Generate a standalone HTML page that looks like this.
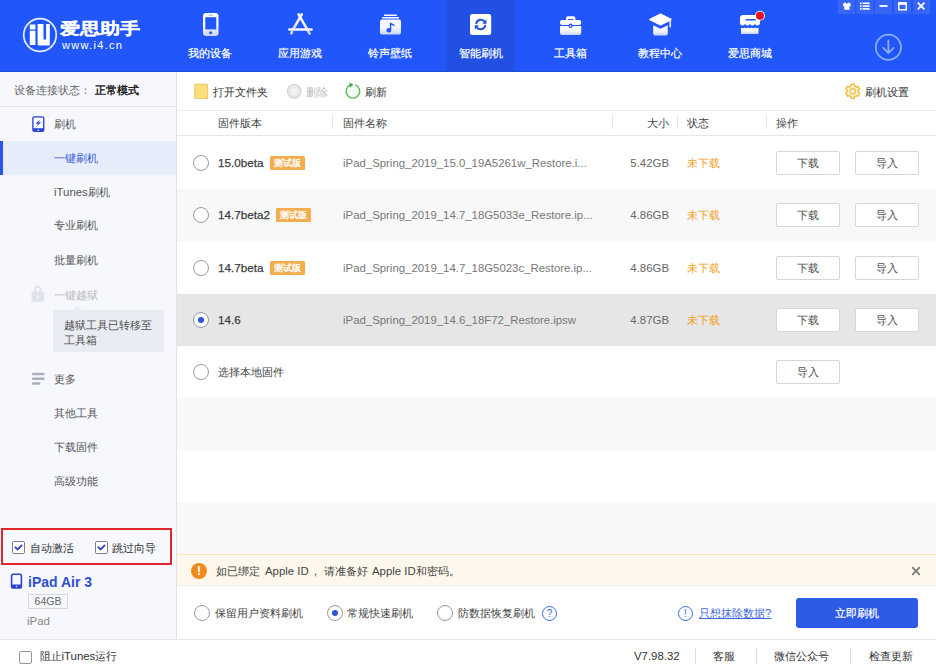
<!DOCTYPE html>
<html><head><meta charset="utf-8">
<style>
*{margin:0;padding:0;box-sizing:border-box}
html,body{width:936px;height:672px;overflow:hidden;background:#fff;font-family:"Liberation Sans",sans-serif;font-size:11.4px;color:#333}
.a{position:absolute;white-space:nowrap;line-height:16px}
#hdr{position:absolute;left:0;top:0;width:936px;height:72px;background:#2157FA}
.nav{position:absolute;top:0;width:70px;height:72px;text-align:center;color:#fff}
.nav .lb{position:absolute;left:0;width:70px;top:45px;font-size:11.4px;line-height:16px;color:#fff;-webkit-text-stroke:0.2px #fff}
.nav svg{position:absolute}
#side{position:absolute;left:0;top:72px;width:177px;height:568px;background:#F6F8FD;border-right:1px solid #E0E2E8}
.si{position:absolute;left:54px;font-size:11.4px;line-height:16px;color:#555;white-space:nowrap}
.btn{position:absolute;width:64px;height:24px;border:1px solid #D6D6D6;border-radius:2px;background:#fff;text-align:center;line-height:23px;font-size:11.4px;color:#505050}
.radio{position:absolute;width:16px;height:16px;border:1px solid #9A9A9A;border-radius:50%;background:#fff}
.tag{position:absolute;height:14px;width:34.5px;background:#F3AD4E;color:#fff;font-size:9px;line-height:14px;text-align:center;border-radius:1.5px;-webkit-text-stroke:0.35px #fff}
.ver{font-size:11.7px;color:#3c3c3c;-webkit-text-stroke:0.25px #3c3c3c}
.ver2{color:#444}
.fn{color:#777}
.fs{color:#666}
.st{color:#F3A11C}
.hd{color:#444}
.sep{position:absolute;width:1px;background:#E6E6E6}
</style></head><body>
<div id="hdr">
  <svg class="a" style="left:0;top:0" width="936" height="72" viewBox="0 0 936 72">
    <defs>
      <linearGradient id="ig" x1="0" y1="0" x2="0" y2="1">
        <stop offset="0" stop-color="#FFFFFF"/><stop offset="0.55" stop-color="#F4F6FF"/><stop offset="1" stop-color="#C9D2FA"/>
      </linearGradient>
    </defs>
    <!-- logo -->
    <circle cx="40" cy="35" r="16.3" fill="none" stroke="#E6EEFF" stroke-width="1.7"/>
    <path d="M29.8 24.6h5.6v4.8h-5.6z M29.8 30.7h5.6v14.4h-5.6z M37.6 24h5.9v15.4h2.6v-15.4h3.7v21.4h-10.9c-.8 0-1.3-.5-1.3-1.3z" fill="#fff"/>
    <!-- nav icons -->
    <!-- phone -->
    <rect x="203" y="13" width="15.5" height="23" rx="3" fill="url(#ig)"/>
    <rect x="205.3" y="17.2" width="11" height="12.2" fill="#2157FA"/>
    <rect x="208.5" y="14.6" width="4.5" height="1" fill="#9fb4fa"/>
    <circle cx="210.7" cy="32.7" r="1.5" fill="#2157FA"/>
    <!-- app store -->
    <g stroke="url(#ig)" stroke-width="2.5" stroke-linecap="round" fill="none">
      <line x1="298.6" y1="14.4" x2="309.6" y2="33.6"/>
      <line x1="301.8" y1="14.4" x2="293.3" y2="29"/>
      <line x1="289.3" y1="29.5" x2="311.5" y2="29.5" stroke="#F2F5FF"/>
      <line x1="292" y1="32" x2="291.3" y2="33.3" stroke="#DDE3FC"/>
    </g>
    <!-- music -->
    <rect x="384" y="14.5" width="13" height="1.6" rx=".5" fill="#fff"/>
    <rect x="382" y="17" width="17" height="1.6" rx=".5" fill="#fff"/>
    <rect x="380" y="19.5" width="21" height="15" rx="2" fill="url(#ig)"/>
    <path d="M391.3 23v7.2a2.4 2.2 0 1 1-1.4-2v-5.7z M391.3 23l3.2 1.8v1.5l-3.2-1.6z" fill="#2157FA"/>
  </svg>
  <div class="a" style="left:0;top:71px;width:936px;height:1px;background:#1D4ED8"></div>
  <!-- active tab bg -->
  <div class="a" style="left:446px;top:0;width:69px;height:72px;background:#2150E3"></div>
  <svg class="a" style="left:440px;top:0" width="496" height="72" viewBox="440 0 496 72">
    <defs>
      <linearGradient id="ig2" x1="0" y1="0" x2="0" y2="1">
        <stop offset="0" stop-color="#FFFFFF"/><stop offset="0.55" stop-color="#F4F6FF"/><stop offset="1" stop-color="#C9D2FA"/>
      </linearGradient>
    </defs>
    <!-- refresh square -->
    <rect x="470" y="14" width="21.2" height="21" rx="2.5" fill="#fff"/>
    <g fill="none" stroke="#2150E3" stroke-width="2" stroke-linecap="round">
      <path d="M476.3 23.2a4.8 4.8 0 0 1 8.6-1.4"/>
      <path d="M485.2 25.8a4.8 4.8 0 0 1-8.6 1.4"/>
    </g>
    <path d="M486.5 19.5v4.3h-4.3z M474.7 29.5v-4.3h4.3z" fill="#2150E3"/>
    <!-- toolbox -->
    <path d="M566 20.5v-2.2c0-1.2.8-2 2-2h5.4c1.2 0 2 .8 2 2v2.2h-2.2v-1.6h-5v1.6z" fill="#fff"/>
    <rect x="560" y="20" width="21.2" height="5" rx="2" fill="#fff"/>
    <path d="M560 26h21.2v7c0 1.1-.9 2-2 2H562c-1.1 0-2-.9-2-2z" fill="url(#ig2)"/>
    <rect x="568.6" y="23.5" width="4" height="4.5" rx="1.8" fill="#2157FA"/>
    <circle cx="570.6" cy="25.8" r="0.9" fill="#fff"/>
    <!-- grad cap -->
    <path d="M660.5 14.2l10.5 5.3-10.5 5.3-10.5-5.3z" fill="#fff" stroke="#fff" stroke-width="1.5" stroke-linejoin="round"/>
    <path d="M653.2 25.2l7.3 3.6 7.3-3.6v8.2c0 1.2-1 2.2-2.2 2.2h-10.2c-1.2 0-2.2-1-2.2-2.2z" fill="url(#ig2)"/>
    <rect x="669.3" y="20" width="1.8" height="7.5" rx=".9" fill="#DDE3FC"/>
    <!-- shop -->
    <path d="M743 15h14c1.7 0 3 1.3 3 3v5c0 1.4-1.1 2.5-2.5 2.5c-1.1 0-2-.6-2.5-1.5c-.5.9-1.4 1.5-2.5 1.5s-2-.6-2.5-1.5c-.5.9-1.4 1.5-2.5 1.5s-2-.6-2.5-1.5c-.5.9-1.4 1.5-2.5 1.5c-1.4 0-2.5-1.1-2.5-2.5v-5c0-1.7 1.3-3 3-3z" fill="#fff"/>
    <rect x="745.6" y="19" width="10.2" height="1.5" rx=".5" fill="#2157FA"/>
    <path d="M741 27.6c1.1.8 2.4.8 3.5 0 1.1.8 2.4.8 3.5 0 1.1.8 2.4.8 3.5 0 1.1.8 2.4.8 3.5 0 1.1.8 2.4.8 3.5 0V34h-17.5z" fill="url(#ig2)"/>
    <circle cx="760" cy="15.8" r="5" fill="#fff" opacity=".85"/>
    <circle cx="760" cy="15.8" r="4" fill="#E8101E"/>
    <!-- window controls -->
    <g fill="#3766F6">
      <rect x="838" y="0" width="17" height="14"/>
      <rect x="856.5" y="0" width="17" height="14"/>
      <rect x="875" y="0" width="17" height="14"/>
      <rect x="894" y="0" width="17" height="14"/>
      <rect x="913" y="0" width="17" height="14"/>
    </g>
    <path d="M843.6 3L845.8 2.5Q846.3 3.7 846.9 3.7Q847.5 3.7 848 2.5L850.2 3L851 5.9L849.5 6.3V9.7H844.3V6.3L842.8 5.9Z" fill="#fff"/>
    <g fill="#fff">
      <rect x="860" y="2.5" width="1.6" height="1.6"/><rect x="862.6" y="2.5" width="7" height="1.6"/>
      <rect x="860" y="5.3" width="1.6" height="1.6"/><rect x="862.6" y="5.3" width="7" height="1.6"/>
      <rect x="860" y="8.1" width="1.6" height="1.6"/><rect x="862.6" y="8.1" width="7" height="1.6"/>
      <rect x="879.5" y="5.1" width="8" height="1.8"/>
    </g>
    <rect x="898.8" y="2.8" width="7.4" height="7" fill="none" stroke="#fff" stroke-width="1.4"/>
    <rect x="898.8" y="2.8" width="7.4" height="2" fill="#fff"/>
    <path d="M917.8 2.7l6.6 6.6M924.4 2.7l-6.6 6.6" stroke="#fff" stroke-width="1.8"/>
    <!-- download circle -->
    <circle cx="888.4" cy="47.2" r="12.6" fill="none" stroke="#8DAAFC" stroke-width="1.8"/>
    <path d="M888.4 40.5v12.2M883.2 47.8l5.2 5.2 5.2-5.2" fill="none" stroke="#8DAAFC" stroke-width="1.8" stroke-linecap="round" stroke-linejoin="round"/>
  </svg>
  <div class="a" style="left:60px;top:17px;font-size:19.5px;line-height:22px;font-weight:bold;color:#fff;-webkit-text-stroke:0.3px #fff;transform:scale(1,0.8);transform-origin:0 50%">爱思助手</div>
  <div class="a" style="left:62px;top:38px;font-size:11px;line-height:14px;color:#fff;letter-spacing:1.3px">www.i4.cn</div>

  <div class="nav" style="left:175px"><div class="lb">我的设备</div></div>
  <div class="nav" style="left:265px"><div class="lb">应用游戏</div></div>
  <div class="nav" style="left:355px"><div class="lb">铃声壁纸</div></div>
  <div class="nav" style="left:446px"><div class="lb">智能刷机</div></div>
  <div class="nav" style="left:535px"><div class="lb">工具箱</div></div>
  <div class="nav" style="left:625px"><div class="lb">教程中心</div></div>
  <div class="nav" style="left:715px"><div class="lb">爱思商城</div></div>
</div>

<div id="side">
  <div class="a" style="left:14px;top:10px;color:#666">设备连接状态：</div>
  <div class="a" style="left:95px;top:10px;color:#222;font-weight:bold">正常模式</div>
  <div class="a" style="left:0;top:34px;width:176px;height:1px;background:#E3E6EC"></div>
  <div class="si" style="top:44px">刷机</div>
  <div class="a" style="left:0;top:69px;width:176px;height:34px;background:#E7ECFA"></div>
  <div class="a" style="left:0;top:69px;width:3px;height:34px;background:#2C55E8"></div>
  <div class="si" style="top:78px;color:#3558D8">一键刷机</div>
  <div class="si" style="top:112px">iTunes刷机</div>
  <div class="si" style="top:145px">专业刷机</div>
  <div class="si" style="top:180px">批量刷机</div>
  <div class="si" style="top:215px;color:#BBB">一键越狱</div>
  <div class="a" style="left:53px;top:238px;width:111px;height:42px;background:#E9ECF3;border-radius:2px"></div>
  <div class="a" style="left:73px;top:234px;width:0;height:0;border-left:4px solid transparent;border-right:4px solid transparent;border-bottom:4px solid #E9ECF3"></div>
  <div class="a" style="left:64px;top:245.5px;line-height:15.5px;color:#505050">越狱工具已转移至<br>工具箱</div>
  <div class="si" style="top:299px">更多</div>
  <div class="si" style="top:333px">其他工具</div>
  <div class="si" style="top:367px">下载固件</div>
  <div class="si" style="top:401px">高级功能</div>
  <div class="a" style="left:1px;top:456px;width:171px;height:37px;border:2px solid #E0262B"></div>
  <div class="a" style="left:30px;top:468px;color:#333">自动激活</div>
  <div class="a" style="left:112px;top:468px;color:#333">跳过向导</div>
  <div class="a" style="left:28px;top:501px;font-size:14px;line-height:18px;color:#3050D0;font-weight:bold">iPad Air 3</div>
  <div class="a" style="left:28px;top:522px;width:40px;height:15px;border:1px solid #D8D8D8;font-size:10.5px;line-height:13px;text-align:center;color:#666">64GB</div>
  <div class="a" style="left:27px;top:541px;color:#888">iPad</div>
</div>
<svg class="a" style="left:0;top:72px" width="177" height="568" viewBox="0 72 177 568">
  <!-- flash icon -->
  <rect x="32.2" y="116.2" width="12.2" height="15.8" rx="2" fill="#2B46D6"/>
  <rect x="33.6" y="117.6" width="9.4" height="10.6" fill="#fff"/>
  <circle cx="38.3" cy="130.2" r=".8" fill="#fff"/>
  <path d="M40.4 119.2L35.4 123.7H38.1L36.5 126.8L41.1 122.2H38.5Z" fill="#2B46D6"/>
  <!-- lock -->
  <path d="M34.2 292v-2.6c0-2.3 1.6-4 3.6-4s3.6 1.7 3.6 4v2.6h-1.9v-2.6c0-1.2-.7-2-1.7-2s-1.7.8-1.7 2v2.6z" fill="#E0E3EA"/>
  <rect x="31.5" y="291.5" width="12.6" height="10.3" rx="1.2" fill="#E0E3EA"/>
  <rect x="37.1" y="295" width="1.5" height="3.5" fill="#F6F8FD"/>
  <!-- more -->
  <g fill="#A9AFBC">
    <rect x="32" y="372.8" width="12.6" height="2.5" rx="1"/>
    <rect x="32" y="377.5" width="12.6" height="2.5" rx="1"/>
    <rect x="32" y="382.3" width="8.3" height="2.5" rx="1"/>
  </g>
  <!-- checkboxes -->
  <rect x="12.5" y="541.5" width="12" height="12" rx="1" fill="#fff" stroke="#7E7E7E" stroke-width="1"/>
  <path d="M15.4 547.3l2.2 2.1 3.9-3.9" fill="none" stroke="#3A3FCC" stroke-width="1.8" stroke-linecap="round"/>
  <rect x="95.5" y="541.5" width="12" height="12" rx="1" fill="#fff" stroke="#7E7E7E" stroke-width="1"/>
  <path d="M98.4 547.3l2.2 2.1 3.9-3.9" fill="none" stroke="#3A3FCC" stroke-width="1.8" stroke-linecap="round"/>
  <!-- ipad icon -->
  <rect x="11.6" y="574.2" width="9.8" height="13.6" rx="1.6" fill="none" stroke="#2F42D0" stroke-width="1.6"/>
  <rect x="11" y="584.6" width="11" height="3.9" rx="1" fill="#2F42D0"/>
  <circle cx="16.5" cy="586.5" r=".7" fill="#fff"/>
</svg>

<!-- toolbar -->
<div class="a" style="left:177px;top:110px;width:759px;height:1px;background:#EDEDED"></div>
<svg class="a" style="left:177px;top:72px" width="759" height="38" viewBox="177 72 759 38">
  <path d="M194.8 84.2h12.4l.4 1v13.2h-12.8z" fill="#FCDF7C" stroke="#EBC65C" stroke-width="1"/>
  <circle cx="294.2" cy="91.3" r="6.8" fill="#E9E9E9" stroke="#D2D2D2" stroke-width="1.2"/>
  <path d="M291.6 88.7l5.2 5.2M296.8 88.7l-5.2 5.2" stroke="#fff" stroke-width="2.2"/>
  <path d="M291.6 88.7l5.2 5.2M296.8 88.7l-5.2 5.2" stroke="#D6D6D6" stroke-width=".6"/>
  <circle cx="352.9" cy="91.3" r="6.8" fill="#F3FBF3"/>
  <path d="M350.6 84.9a6.8 6.8 0 1 0 4.6 0" fill="none" stroke="#5DBE5F" stroke-width="1.4"/>
  <path d="M349.3 82.6l4.2 2.2-3.6 2.6z" fill="#3FA548"/>
  <path d="M851.08 84.28 L854.32 84.28 L854.62 86.04 L856.30 87.01 L857.97 86.39 L859.59 89.19 L858.21 90.33 L858.21 92.27 L859.59 93.41 L857.97 96.21 L856.30 95.59 L854.62 96.56 L854.32 98.32 L851.08 98.32 L850.78 96.56 L849.10 95.59 L847.43 96.21 L845.81 93.41 L847.19 92.27 L847.19 90.33 L845.81 89.19 L847.43 86.39 L849.10 87.01 L850.78 86.04Z" fill="#FDF3D0" stroke="#F0C04A" stroke-width="1.5" stroke-linejoin="round"/>
  <circle cx="852.7" cy="91.3" r="2.6" fill="#fff" stroke="#F0C04A" stroke-width="1.4"/>
</svg>
<div class="a" style="left:213px;top:84px;color:#333">打开文件夹</div>
<div class="a" style="left:306px;top:84px;color:#BBB">删除</div>
<div class="a" style="left:365px;top:84px;color:#333">刷新</div>
<div class="a" style="left:865px;top:84px;color:#333">刷机设置</div>
<!-- table header -->
<div class="a" style="left:177px;top:135px;width:759px;height:1px;background:#E6E6E6"></div>
<div class="a hd" style="left:218px;top:115px">固件版本</div>
<div class="sep" style="left:332px;top:115px;height:14px"></div>
<div class="a hd" style="left:343px;top:115px">固件名称</div>
<div class="sep" style="left:612px;top:115px;height:14px"></div>
<div class="a hd" style="left:600px;width:69px;text-align:right;top:115px">大小</div>
<div class="sep" style="left:677px;top:115px;height:14px"></div>
<div class="a hd" style="left:687px;top:115px">状态</div>
<div class="sep" style="left:766px;top:115px;height:14px"></div>
<div class="a hd" style="left:776px;top:115px">操作</div>
<div class="a" style="left:177px;top:136.6px;width:759px;height:52.4px;background:#FFFFFF"></div>
<div class="a" style="left:177px;top:188.9px;width:759px;height:52.4px;background:#F8F8F8"></div>
<div class="a" style="left:177px;top:241.2px;width:759px;height:52.4px;background:#FFFFFF"></div>
<div class="a" style="left:177px;top:293.5px;width:759px;height:52.4px;background:#E6E6E6"></div>
<div class="a" style="left:177px;top:345.8px;width:759px;height:52.4px;background:#FFFFFF"></div>
<div class="a" style="left:177px;top:398.1px;width:759px;height:52.4px;background:#F8F8F8"></div>
<div class="a" style="left:177px;top:450.4px;width:759px;height:52.4px;background:#FFFFFF"></div>
<div class="a" style="left:177px;top:502.7px;width:759px;height:52.4px;background:#F8F8F8"></div>
<div class="radio" style="left:193px;top:155.2px"></div>
<div class="a ver" style="left:218px;top:155.2px">15.0beta</div>
<div class="tag" style="left:270px;top:156.2px">测试版</div>
<div class="a fn" style="left:343px;top:155.2px">iPad_Spring_2019_15.0_19A5261w_Restore.i...</div>
<div class="a fs" style="left:600px;width:69px;text-align:right;top:155.2px">5.42GB</div>
<div class="a st" style="left:687px;top:155.2px">未下载</div>
<div class="btn" style="left:776px;top:151.2px">下载</div>
<div class="btn" style="left:855px;top:151.2px">导入</div>
<div class="radio" style="left:193px;top:207.4px"></div>
<div class="a ver" style="left:218px;top:207.4px">14.7beta2</div>
<div class="tag" style="left:276px;top:208.4px">测试版</div>
<div class="a fn" style="left:343px;top:207.4px">iPad_Spring_2019_14.7_18G5033e_Restore.ip...</div>
<div class="a fs" style="left:600px;width:69px;text-align:right;top:207.4px">4.86GB</div>
<div class="a st" style="left:687px;top:207.4px">未下载</div>
<div class="btn" style="left:776px;top:203.4px">下载</div>
<div class="btn" style="left:855px;top:203.4px">导入</div>
<div class="radio" style="left:193px;top:259.7px"></div>
<div class="a ver" style="left:218px;top:259.7px">14.7beta</div>
<div class="tag" style="left:270px;top:260.7px">测试版</div>
<div class="a fn" style="left:343px;top:259.7px">iPad_Spring_2019_14.7_18G5023c_Restore.ip...</div>
<div class="a fs" style="left:600px;width:69px;text-align:right;top:259.7px">4.86GB</div>
<div class="a st" style="left:687px;top:259.7px">未下载</div>
<div class="btn" style="left:776px;top:255.7px">下载</div>
<div class="btn" style="left:855px;top:255.7px">导入</div>
<div class="radio" style="left:193px;top:312.0px"></div>
<div class="a" style="left:198px;top:317.0px;width:6px;height:6px;border-radius:50%;background:#2F4FE0"></div>
<div class="a ver" style="left:218px;top:312.0px">14.6</div>
<div class="a fn" style="left:343px;top:312.0px">iPad_Spring_2019_14.6_18F72_Restore.ipsw</div>
<div class="a fs" style="left:600px;width:69px;text-align:right;top:312.0px">4.87GB</div>
<div class="a st" style="left:687px;top:312.0px">未下载</div>
<div class="btn" style="left:776px;top:308.0px">下载</div>
<div class="btn" style="left:855px;top:308.0px">导入</div>
<div class="radio" style="left:193px;top:364.3px"></div>
<div class="a ver2" style="left:218px;top:364.3px">选择本地固件</div>
<div class="btn" style="left:776px;top:360.3px">导入</div><!-- notice -->
<div class="a" style="left:177px;top:554px;width:759px;height:32px;background:#FDF8EB;border-top:1px solid #F5E6BD;border-bottom:1px solid #EEE"></div>
<div class="a" style="left:191px;top:563px;width:16px;height:16px;border-radius:50%;background:#F08A1C;color:#fff;font-weight:bold;font-size:12px;line-height:16px;text-align:center">!</div>
<div class="a" style="left:215.5px;top:563px;color:#444">如已绑定</div><div class="a" style="left:265px;top:563px;color:#444">Apple ID</div><div class="a" style="left:310px;top:563px;color:#444">，</div><div class="a" style="left:324px;top:563px;color:#444">请准备好</div><div class="a" style="left:372px;top:563px;color:#444">Apple ID和密码。</div>
<svg class="a" style="left:908px;top:563px" width="16" height="16" viewBox="0 0 16 16"><path d="M4.2 4.2l7.6 7.6M11.8 4.2l-7.6 7.6" stroke="#7A7A7A" stroke-width="1.8"/></svg>
<!-- options -->
<div class="radio" style="left:194px;top:605px"></div>
<div class="a" style="left:215px;top:605px;color:#444">保留用户资料刷机</div>
<div class="radio" style="left:327px;top:605px"></div>
<div class="a" style="left:332px;top:610px;width:6px;height:6px;border-radius:50%;background:#2F55D8"></div>
<div class="a" style="left:347px;top:605px;color:#444">常规快速刷机</div>
<div class="radio" style="left:437px;top:605px"></div>
<div class="a" style="left:458px;top:605px;color:#444">防数据恢复刷机</div>
<div class="a" style="left:542px;top:606px;width:15px;height:15px;border:1.3px solid #3A6BE0;border-radius:50%;color:#3A6BE0;font-size:10px;line-height:13px;text-align:center">?</div>
<div class="a" style="left:678px;top:606px;width:15px;height:15px;border:1.3px solid #3A6BE0;border-radius:50%;color:#3A6BE0;font-size:10px;line-height:13px;text-align:center">!</div>
<div class="a" style="left:699px;top:605px;color:#3A66D8;text-decoration:underline">只想抹除数据?</div>
<div class="a" style="left:796px;top:598px;width:122px;height:30px;background:#2E5BE6;border-radius:3px;color:#fff;text-align:center;line-height:30px;-webkit-text-stroke:0.2px #fff">立即刷机</div>

<!-- status bar -->
<div class="a" style="left:0;top:639px;width:936px;height:1px;background:#E3E6EC"></div>
<div class="a" style="left:0;top:640px;width:936px;height:32px;background:#fff"></div>
<div class="a" style="left:19px;top:651px;width:13px;height:13px;border:1px solid #959595;border-radius:2px;background:#fff"></div>
<div class="a" style="left:39.5px;top:648px;color:#333">阻止iTunes运行</div>
<div class="a" style="left:634px;top:648px;color:#333">V7.98.32</div>
<div class="a" style="left:695px;top:648px;width:1px;height:16px;background:#DDD"></div>
<div class="a" style="left:713px;top:648px;color:#333">客服</div>
<div class="a" style="left:756px;top:648px;width:1px;height:16px;background:#DDD"></div>
<div class="a" style="left:774px;top:648px;color:#333">微信公众号</div>
<div class="a" style="left:850px;top:648px;width:1px;height:16px;background:#DDD"></div>
<div class="a" style="left:869px;top:648px;color:#333">检查更新</div>
</body></html>
